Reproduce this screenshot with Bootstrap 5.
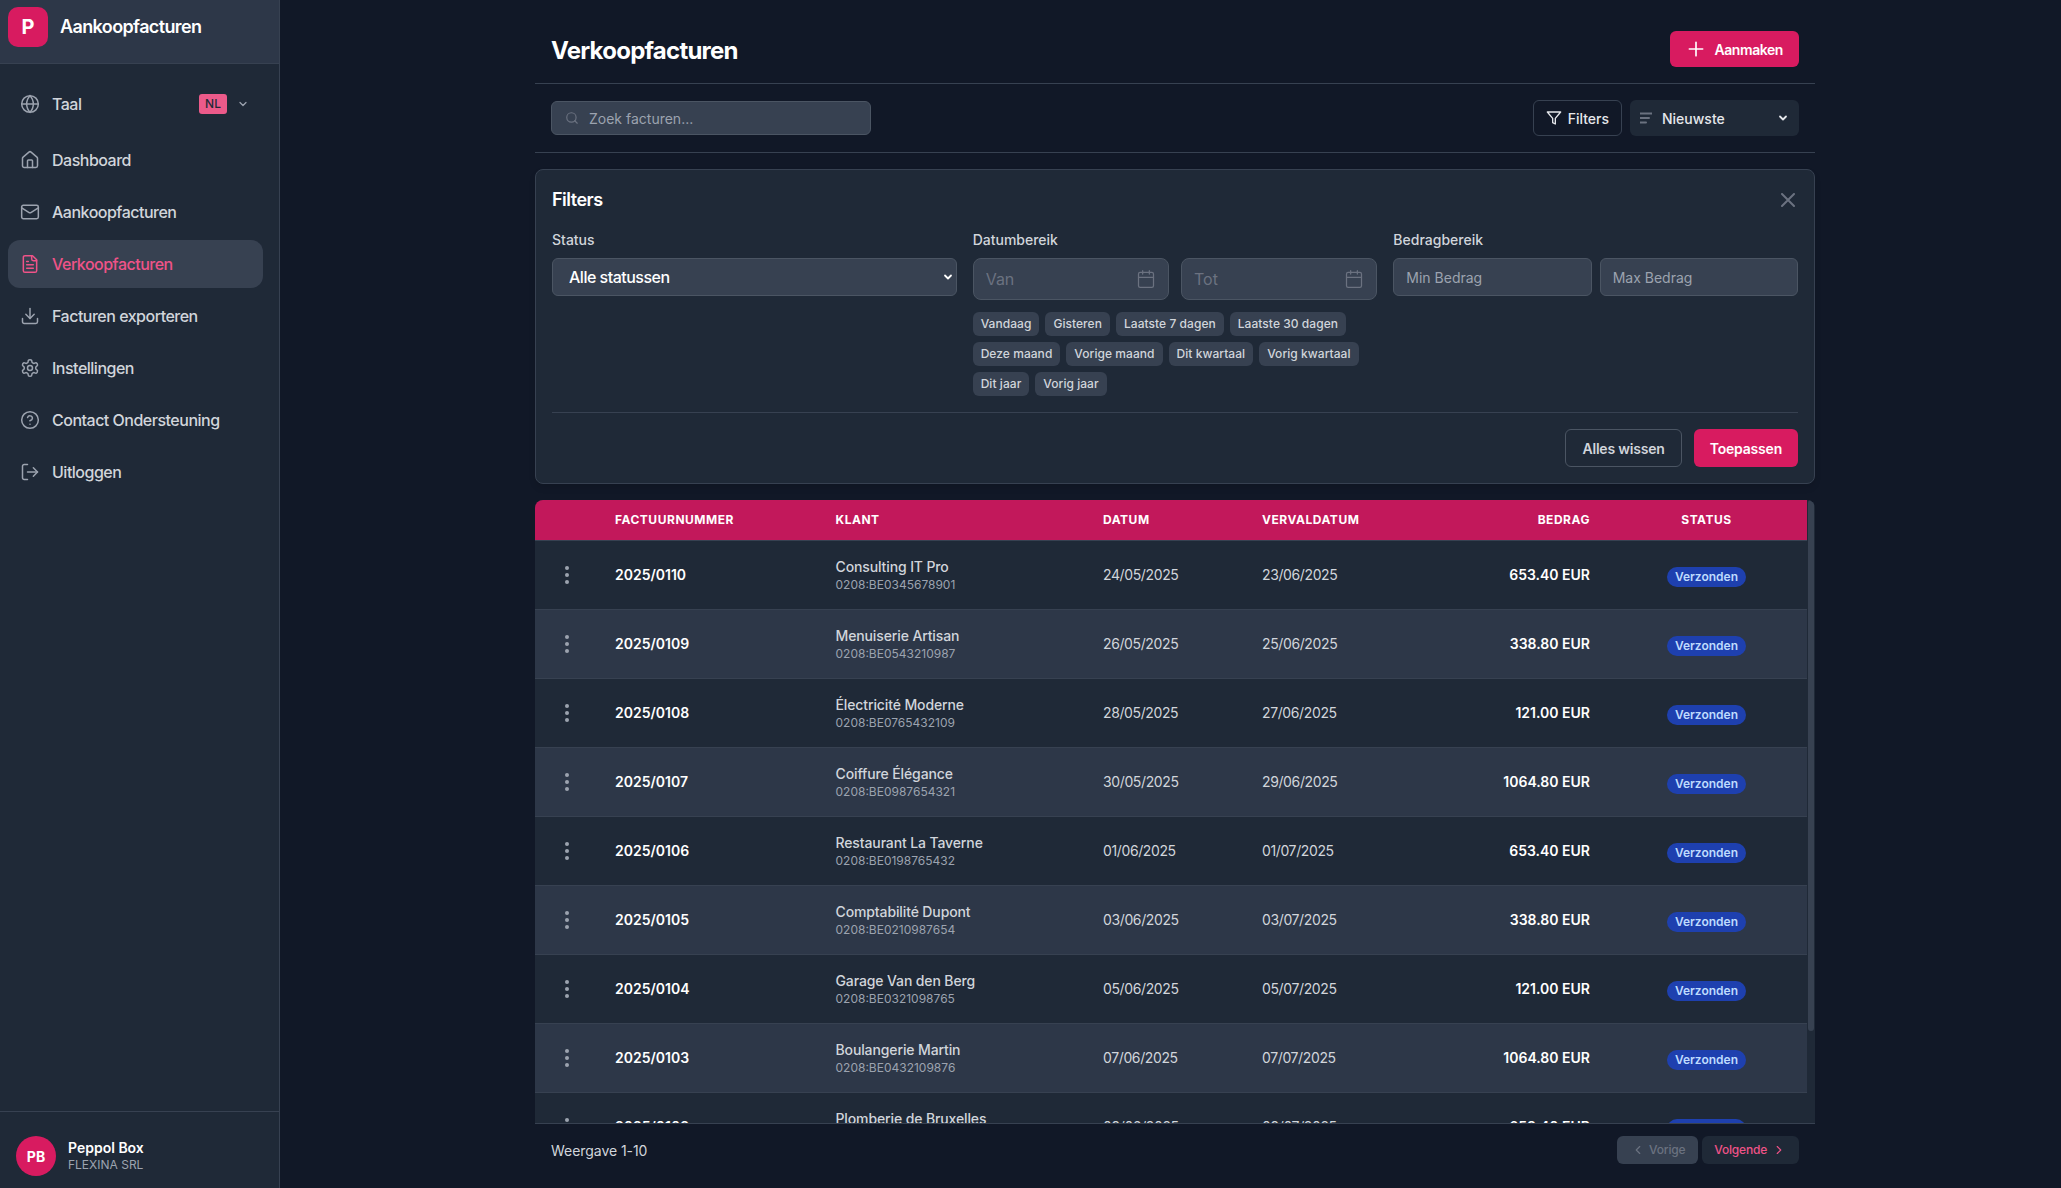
<!DOCTYPE html>
<html lang="nl">
<head>
<meta charset="utf-8">
<title>Verkoopfacturen</title>
<link rel="stylesheet" href="https://cdn.jsdelivr.net/npm/bootstrap@5.3.0/dist/css/bootstrap.min.css">
<style>
html,body{height:100%;overflow:hidden}
body{background:#111827;color:#d1d5db;font-family:Inter,"Liberation Sans",sans-serif;font-size:14px}
svg.ico{fill:none;stroke:currentColor;stroke-width:2;stroke-linecap:round;stroke-linejoin:round;flex:none}
.app-shell{height:100vh}
.side{width:280px;flex:none;background:#1f2937;border-right:1px solid #374151}
.side-head{height:64px;background:#2d3748;border-bottom:1px solid #374151;padding:7px 0 0 8px;gap:12px}
.logo-box{width:40px;height:40px;border-radius:10px;background:#d81b60;color:#fff;font-size:20px;font-weight:700}
.side-title{font-size:18px;font-weight:600;color:#fff;letter-spacing:-.62px;line-height:40px}
.side-nav{padding:16px 16px 0 8px;margin:0;list-style:none}
.nav-row{height:48px;margin-bottom:4px;padding:0 12px;gap:12px;border-radius:12px;color:#d1d5db;text-decoration:none;font-size:16px;font-weight:500;letter-spacing:-.5px}
.nav-row svg{color:#9ca3af;width:20px;height:20px;stroke-width:1.8}
.nav-row.is-active{background:#374151;color:#ef5388}
.nav-row.is-active svg{color:#ef5388}
.lang-row{margin-bottom:8px}
.lang-tag{background:#ec5a8a;color:#1f2937;font-size:12px;font-weight:500;height:20px;line-height:20px;width:28px;text-align:center;letter-spacing:0;border-radius:3px;margin-left:auto}
.nav-row svg.lang-chev{width:12px;height:12px;margin:0 2px 0 -2px;stroke-width:2.5}
.side-foot{height:77px;border-top:1px solid #374151;padding:12px 16px 0;gap:12px}
.avatar-dot{width:40px;height:40px;border-radius:50%;background:#d81b60;color:#fff;font-size:14px;font-weight:700}
.foot-name{font-size:14px;font-weight:600;color:#fff;line-height:18px}
.foot-org{font-size:12px;color:#9ca3af;line-height:16px}
.page-col{width:1280px;margin-left:255px;flex:none;height:100vh}
.page-head{height:84px;padding:16px 16px 0;border-bottom:1px solid #374151}
.page-title{font-size:24px;font-weight:700;color:#fff;margin:3px 0 0;letter-spacing:-.76px}
.btn-rose{background:#d81b60;color:#fff;border:0;border-radius:6px;font-size:14px;font-weight:600}
.btn-rose:hover{background:#c2185b;color:#fff}
.btn-add{height:36px;padding:0 16px;gap:8px;letter-spacing:-.42px;margin-bottom:1px}
.tool-bar{height:69px;padding:0 16px;border-bottom:1px solid #374151}
.search-wrap{width:320px;height:34px}
.search-wrap svg{left:14px;top:10px;width:14px;height:14px;color:#6b7280;position:absolute}
.ctl{background:#374151;border:1px solid #4b5563;color:#fff;border-radius:6px}
.ctl::placeholder{color:#9ca3af;opacity:1}
.ctl:focus{background:#374151;border-color:#4b5563;color:#fff;box-shadow:none}
.search-input{height:34px;font-size:14px;padding:0 12px 0 37px}
.btn-ghost{background:transparent;border:1px solid #374151;color:#e5e7eb;border-radius:6px;font-size:14px;font-weight:500}
.btn-filters{height:36px;padding:0 12px;gap:6px}
.sort-wrap{width:169px;height:36px;margin-left:8px}
.sort-wrap svg{position:absolute;left:10px;top:12px;width:12px;height:12px;color:#6b7280}
.sort-select{height:36px;background-color:#1f2937;border:0;color:#e5e7eb;font-size:14px;font-weight:500;padding:0 28px 0 32px;border-radius:6px;background-image:url("data:image/svg+xml,%3csvg xmlns='http://www.w3.org/2000/svg' viewBox='0 0 12 12'%3e%3cpath fill='none' stroke='%23e5e7eb' stroke-width='1.8' stroke-linecap='round' stroke-linejoin='round' d='M3 4.5 6 7.5 9 4.5'/%3e%3c/svg%3e");background-position:right 10px center;background-size:12px 12px}
.filter-panel{margin-top:16px;background:#1f2937;border:1px solid #374151;border-radius:8px;padding:16px;box-shadow:0 4px 6px rgba(0,0,0,.1);flex:none}
.panel-title{font-size:18px;font-weight:600;color:#fff;line-height:28px;margin:0;letter-spacing:-.5px}
.panel-close{width:14px;height:14px;color:#6b7280;stroke-width:1.6;margin-right:3px}
.panel-grid{display:grid;grid-template-columns:repeat(3,1fr);gap:16px;margin-top:16px}
.fld-label{font-size:14px;font-weight:500;line-height:20px;color:#d1d5db;margin-bottom:8px;display:block}
.status-select{height:38px;font-size:16px;font-weight:500;letter-spacing:-.5px;padding:0 28px 0 16px;background-image:url("data:image/svg+xml,%3csvg xmlns='http://www.w3.org/2000/svg' viewBox='0 0 12 12'%3e%3cpath fill='none' stroke='%23fff' stroke-width='1.8' stroke-linecap='round' stroke-linejoin='round' d='M3 4.5 6 7.5 9 4.5'/%3e%3c/svg%3e");background-position:right 2px center;background-size:12px 12px;background-color:#374151;color:#fff;border:1px solid #4b5563}
.status-select:focus{background-color:#374151;border-color:#4b5563;box-shadow:none;color:#fff}
.date-pair{gap:12px}
.date-input{height:42px;font-size:16px;padding:0 40px 0 12px;border-radius:8px}
.date-input::placeholder{color:#6b7280}
.date-wrap svg{position:absolute;right:13px;top:11px;width:20px;height:20px;color:#6b7280;stroke-width:1.5}
.amt-input{height:38px;font-size:14px;padding:0 12px}
.chip-list{gap:6px;margin-top:12px}
.chip-btn{height:24px;padding:0 8px;font-size:12px;font-weight:500;line-height:24px;letter-spacing:.05px;background:#374151;color:#d1d5db;border:0;border-radius:6px}
.panel-foot{margin-top:16px;padding-top:16px;border-top:1px solid #374151;gap:12px}
.panel-btn{height:38px;padding:0 16px;display:inline-flex;align-items:center;letter-spacing:-.2px}
.panel-btn.btn-ghost{border-color:#4b5563;font-weight:600;color:#d1d5db}
.table-frame{margin-top:16px;flex:1 1 0;min-height:0;overflow:hidden;border-bottom:1px solid #374151;border-top-left-radius:8px;border-top-right-radius:8px;background:#1f2937}
.table-clip{flex:1 1 0;min-width:0;overflow:hidden}
.rail{width:8px;flex:none;padding-left:1px;background:#1f2937}
.rail-thumb{height:531px;background:#374151;border-radius:3px;width:6px}
.inv-table{--bs-table-bg:#1f2937;--bs-table-color:#d1d5db;--bs-table-border-color:#374151;margin:0;table-layout:fixed;width:100%}
.inv-table thead th{background:#c2185b;color:#fff;font-size:12px;font-weight:700;line-height:16px;letter-spacing:.52px;text-transform:uppercase;padding:12px 16px;border-bottom:1px solid #374151}
.inv-table tbody td{padding:16px;vertical-align:middle;font-size:14px;line-height:20px;border-bottom:1px solid #374151}
.inv-table tbody tr:nth-child(even) td{background:#2d3748}
.c-act{width:64px}.c-num{width:220.5px}.c-cli{width:267.5px}.c-dat{width:159px}.c-due{width:190px}.c-amt{width:170px;text-align:right}.c-sta{text-align:center}
.inv-table tbody td.c-act{padding:0 0 0 20px}
.inv-table tbody td.day-cell{letter-spacing:-.38px}
.kebab-ico{width:24px;height:24px;color:#9ca3af;display:block}
.inv-num{color:#fff;font-weight:600}
.cli-name{font-weight:500;color:#d1d5db;display:block;letter-spacing:-.12px}
.cli-id{font-size:12px;line-height:16px;color:#9ca3af;display:block}
.inv-amt{color:#fff;font-weight:600}
.state-pill{display:inline-block;background:#1e40af;color:#bfdbfe;font-size:12px;font-weight:600;line-height:20px;height:20px;padding:0 8px;border-radius:10px;margin-top:4px;vertical-align:top}
.page-foot{height:64px;padding:0 16px 12px;flex:none}
.count-text{color:#d1d5db;font-size:14px;letter-spacing:-.05px}
.pager-btn{height:28px;border:0;border-radius:6px;font-size:12px;font-weight:500;letter-spacing:-.2px}
.pager-btn svg{width:14px;height:14px}
.btn.pager-prev:disabled{background:#374151;color:#6b7280;opacity:1;padding:0 13px 0 14px;gap:4px}
.pager-next{background:#1f2937;color:#ef5388;margin-left:4px;padding:0 13px 0 12px;gap:5px}
</style>
</head>
<body>
<svg width="0" height="0" class="position-absolute">
<symbol id="i-globe" viewBox="0 0 24 24"><circle cx="12" cy="12" r="10"/><path d="M12 2a14.5 14.5 0 0 0 0 20 14.5 14.5 0 0 0 0-20"/><path d="M2 12h20"/></symbol>
<symbol id="i-home" viewBox="0 0 24 24"><path d="M15 21v-8a1 1 0 0 0-1-1h-4a1 1 0 0 0-1 1v8"/><path d="M3 10a2 2 0 0 1 .709-1.528l7-5.999a2 2 0 0 1 2.582 0l7 5.999A2 2 0 0 1 21 10v9a2 2 0 0 1-2 2H5a2 2 0 0 1-2-2z"/></symbol>
<symbol id="i-mail" viewBox="0 0 24 24"><rect x="2" y="4" width="20" height="16" rx="2"/><path d="m22 7-8.97 5.7a1.94 1.94 0 0 1-2.06 0L2 7"/></symbol>
<symbol id="i-file" viewBox="0 0 24 24"><path d="M15 2H6a2 2 0 0 0-2 2v16a2 2 0 0 0 2 2h12a2 2 0 0 0 2-2V7Z"/><path d="M14 2v4a2 2 0 0 0 2 2h4"/><path d="M10 9H8"/><path d="M16 13H8"/><path d="M16 17H8"/></symbol>
<symbol id="i-down" viewBox="0 0 24 24"><path d="M21 15v4a2 2 0 0 1-2 2H5a2 2 0 0 1-2-2v-4"/><polyline points="7 10 12 15 17 10"/><line x1="12" y1="15" x2="12" y2="3"/></symbol>
<symbol id="i-gear" viewBox="0 0 24 24"><path d="M12.22 2h-.44a2 2 0 0 0-2 2v.18a2 2 0 0 1-1 1.73l-.43.25a2 2 0 0 1-2 0l-.15-.08a2 2 0 0 0-2.73.73l-.22.38a2 2 0 0 0 .73 2.73l.15.1a2 2 0 0 1 1 1.72v.51a2 2 0 0 1-1 1.74l-.15.09a2 2 0 0 0-.73 2.73l.22.38a2 2 0 0 0 2.73.73l.15-.08a2 2 0 0 1 2 0l.43.25a2 2 0 0 1 1 1.73V20a2 2 0 0 0 2 2h.44a2 2 0 0 0 2-2v-.18a2 2 0 0 1 1-1.73l.43-.25a2 2 0 0 1 2 0l.15.08a2 2 0 0 0 2.73-.73l.22-.39a2 2 0 0 0-.73-2.73l-.15-.08a2 2 0 0 1-1-1.74v-.5a2 2 0 0 1 1-1.74l.15-.09a2 2 0 0 0 .73-2.73l-.22-.38a2 2 0 0 0-2.73-.73l-.15.08a2 2 0 0 1-2 0l-.43-.25a2 2 0 0 1-1-1.73V4a2 2 0 0 0-2-2z"/><circle cx="12" cy="12" r="3"/></symbol>
<symbol id="i-help" viewBox="0 0 24 24"><circle cx="12" cy="12" r="10"/><path d="M9.09 9a3 3 0 0 1 5.83 1c0 2-3 3-3 3"/><path d="M12 17h.01"/></symbol>
<symbol id="i-out" viewBox="0 0 24 24"><path d="M9 21H5a2 2 0 0 1-2-2V5a2 2 0 0 1 2-2h4"/><polyline points="16 17 21 12 16 7"/><line x1="21" y1="12" x2="9" y2="12"/></symbol>
<symbol id="i-chev" viewBox="0 0 24 24"><path d="m6 9 6 6 6-6"/></symbol>
<symbol id="i-left" viewBox="0 0 24 24"><path d="m15 18-6-6 6-6"/></symbol>
<symbol id="i-right" viewBox="0 0 24 24"><path d="m9 18 6-6-6-6"/></symbol>
<symbol id="i-search" viewBox="0 0 24 24"><circle cx="11" cy="11" r="8"/><path d="m21 21-4.3-4.3"/></symbol>
<symbol id="i-plus" viewBox="0 0 24 24"><path d="M12 4v16M4 12h16"/></symbol>
<symbol id="i-funnel" viewBox="0 0 24 24"><polygon points="22 3 2 3 10 12.46 10 19 14 21 14 12.46 22 3"/></symbol>
<symbol id="i-sort" viewBox="0 0 12 12"><path d="M0 1.5h12M0 6h9M0 10.5h6"/></symbol>
<symbol id="i-x" viewBox="0 0 14 14"><path d="M1 1l12 12M13 1 1 13"/></symbol>
<symbol id="i-cal" viewBox="0 0 24 24"><rect x="3" y="4" width="18" height="18" rx="2"/><path d="M16 2v4M8 2v4M3 10h18"/></symbol>
<symbol id="i-dots" viewBox="0 0 24 24"><circle cx="12" cy="5" r="2" fill="currentColor" stroke="none"/><circle cx="12" cy="12" r="2" fill="currentColor" stroke="none"/><circle cx="12" cy="19" r="2" fill="currentColor" stroke="none"/></symbol>
</svg>

<div class="app-shell d-flex">
  <aside class="side d-flex flex-column">
    <div class="side-head d-flex align-items-start">
      <div class="logo-box d-flex align-items-center justify-content-center">P</div>
      <span class="side-title">Aankoopfacturen</span>
    </div>
    <nav class="side-nav flex-grow-1">
      <a href="#" class="nav-row lang-row d-flex align-items-center"><svg class="ico"><use href="#i-globe"/></svg><span>Taal</span><span class="lang-tag">NL</span><svg class="ico lang-chev"><use href="#i-chev"/></svg></a>
      <a href="#" class="nav-row d-flex align-items-center"><svg class="ico"><use href="#i-home"/></svg><span>Dashboard</span></a>
      <a href="#" class="nav-row d-flex align-items-center"><svg class="ico"><use href="#i-mail"/></svg><span>Aankoopfacturen</span></a>
      <a href="#" class="nav-row is-active d-flex align-items-center"><svg class="ico"><use href="#i-file"/></svg><span>Verkoopfacturen</span></a>
      <a href="#" class="nav-row d-flex align-items-center"><svg class="ico"><use href="#i-down"/></svg><span>Facturen exporteren</span></a>
      <a href="#" class="nav-row d-flex align-items-center"><svg class="ico"><use href="#i-gear"/></svg><span>Instellingen</span></a>
      <a href="#" class="nav-row d-flex align-items-center"><svg class="ico"><use href="#i-help"/></svg><span>Contact Ondersteuning</span></a>
      <a href="#" class="nav-row d-flex align-items-center"><svg class="ico"><use href="#i-out"/></svg><span>Uitloggen</span></a>
    </nav>
    <div class="side-foot d-flex align-items-center">
      <div class="avatar-dot d-flex align-items-center justify-content-center">PB</div>
      <div><div class="foot-name">Peppol Box</div><div class="foot-org">FLEXINA SRL</div></div>
    </div>
  </aside>

  <main class="page-col d-flex flex-column">
    <header class="page-head d-flex align-items-center justify-content-between">
      <h1 class="page-title">Verkoopfacturen</h1>
      <button class="btn btn-rose btn-add d-inline-flex align-items-center"><svg class="ico" width="20" height="20"><use href="#i-plus"/></svg>Aanmaken</button>
    </header>

    <div class="tool-bar d-flex align-items-center justify-content-between">
      <div class="search-wrap position-relative">
        <svg class="ico"><use href="#i-search"/></svg>
        <input class="form-control ctl search-input" type="text" placeholder="Zoek facturen...">
      </div>
      <div class="d-flex align-items-center">
        <button class="btn btn-ghost btn-filters d-inline-flex align-items-center"><svg class="ico" width="16" height="16"><use href="#i-funnel"/></svg>Filters</button>
        <div class="sort-wrap position-relative">
          <svg class="ico"><use href="#i-sort"/></svg>
          <select class="form-select sort-select"><option>Nieuwste</option></select>
        </div>
      </div>
    </div>

    <section class="filter-panel">
      <div class="d-flex align-items-center justify-content-between">
        <h2 class="panel-title">Filters</h2>
        <svg class="ico panel-close"><use href="#i-x"/></svg>
      </div>
      <div class="panel-grid">
        <div>
          <label class="fld-label">Status</label>
          <select class="form-select status-select"><option>Alle statussen</option></select>
        </div>
        <div>
          <label class="fld-label">Datumbereik</label>
          <div class="d-flex date-pair">
            <div class="date-wrap position-relative flex-fill"><input class="form-control ctl date-input" type="text" placeholder="Van"><svg class="ico"><use href="#i-cal"/></svg></div>
            <div class="date-wrap position-relative flex-fill"><input class="form-control ctl date-input" type="text" placeholder="Tot"><svg class="ico"><use href="#i-cal"/></svg></div>
          </div>
          <div class="chip-list d-flex flex-wrap">
            <button class="chip-btn">Vandaag</button><button class="chip-btn">Gisteren</button><button class="chip-btn">Laatste 7 dagen</button><button class="chip-btn">Laatste 30 dagen</button>
            <button class="chip-btn">Deze maand</button><button class="chip-btn">Vorige maand</button><button class="chip-btn">Dit kwartaal</button><button class="chip-btn">Vorig kwartaal</button>
            <button class="chip-btn">Dit jaar</button><button class="chip-btn">Vorig jaar</button>
          </div>
        </div>
        <div>
          <label class="fld-label">Bedragbereik</label>
          <div class="d-flex gap-2">
            <input class="form-control ctl amt-input" type="text" placeholder="Min Bedrag">
            <input class="form-control ctl amt-input" type="text" placeholder="Max Bedrag">
          </div>
        </div>
      </div>
      <div class="panel-foot d-flex justify-content-end">
        <button class="btn btn-ghost panel-btn">Alles wissen</button>
        <button class="btn btn-rose panel-btn">Toepassen</button>
      </div>
    </section>

    <div class="table-frame d-flex">
      <div class="table-clip">
      <table class="table inv-table">
        <thead><tr><th class="c-act"></th><th class="c-num">Factuurnummer</th><th class="c-cli">Klant</th><th class="c-dat">Datum</th><th class="c-due">Vervaldatum</th><th class="c-amt">Bedrag</th><th class="c-sta">Status</th></tr></thead>
        <tbody>
          <tr><td class="c-act"><svg class="ico kebab-ico"><use href="#i-dots"/></svg></td><td class="inv-num">2025/0110</td><td><span class="cli-name">Consulting IT Pro</span><span class="cli-id">0208:BE0345678901</span></td><td class="day-cell">24/05/2025</td><td class="day-cell">23/06/2025</td><td class="c-amt inv-amt">653.40 EUR</td><td class="c-sta"><span class="state-pill">Verzonden</span></td></tr>
          <tr><td class="c-act"><svg class="ico kebab-ico"><use href="#i-dots"/></svg></td><td class="inv-num">2025/0109</td><td><span class="cli-name">Menuiserie Artisan</span><span class="cli-id">0208:BE0543210987</span></td><td class="day-cell">26/05/2025</td><td class="day-cell">25/06/2025</td><td class="c-amt inv-amt">338.80 EUR</td><td class="c-sta"><span class="state-pill">Verzonden</span></td></tr>
          <tr><td class="c-act"><svg class="ico kebab-ico"><use href="#i-dots"/></svg></td><td class="inv-num">2025/0108</td><td><span class="cli-name">Électricité Moderne</span><span class="cli-id">0208:BE0765432109</span></td><td class="day-cell">28/05/2025</td><td class="day-cell">27/06/2025</td><td class="c-amt inv-amt">121.00 EUR</td><td class="c-sta"><span class="state-pill">Verzonden</span></td></tr>
          <tr><td class="c-act"><svg class="ico kebab-ico"><use href="#i-dots"/></svg></td><td class="inv-num">2025/0107</td><td><span class="cli-name">Coiffure Élégance</span><span class="cli-id">0208:BE0987654321</span></td><td class="day-cell">30/05/2025</td><td class="day-cell">29/06/2025</td><td class="c-amt inv-amt">1064.80 EUR</td><td class="c-sta"><span class="state-pill">Verzonden</span></td></tr>
          <tr><td class="c-act"><svg class="ico kebab-ico"><use href="#i-dots"/></svg></td><td class="inv-num">2025/0106</td><td><span class="cli-name">Restaurant La Taverne</span><span class="cli-id">0208:BE0198765432</span></td><td class="day-cell">01/06/2025</td><td class="day-cell">01/07/2025</td><td class="c-amt inv-amt">653.40 EUR</td><td class="c-sta"><span class="state-pill">Verzonden</span></td></tr>
          <tr><td class="c-act"><svg class="ico kebab-ico"><use href="#i-dots"/></svg></td><td class="inv-num">2025/0105</td><td><span class="cli-name">Comptabilité Dupont</span><span class="cli-id">0208:BE0210987654</span></td><td class="day-cell">03/06/2025</td><td class="day-cell">03/07/2025</td><td class="c-amt inv-amt">338.80 EUR</td><td class="c-sta"><span class="state-pill">Verzonden</span></td></tr>
          <tr><td class="c-act"><svg class="ico kebab-ico"><use href="#i-dots"/></svg></td><td class="inv-num">2025/0104</td><td><span class="cli-name">Garage Van den Berg</span><span class="cli-id">0208:BE0321098765</span></td><td class="day-cell">05/06/2025</td><td class="day-cell">05/07/2025</td><td class="c-amt inv-amt">121.00 EUR</td><td class="c-sta"><span class="state-pill">Verzonden</span></td></tr>
          <tr><td class="c-act"><svg class="ico kebab-ico"><use href="#i-dots"/></svg></td><td class="inv-num">2025/0103</td><td><span class="cli-name">Boulangerie Martin</span><span class="cli-id">0208:BE0432109876</span></td><td class="day-cell">07/06/2025</td><td class="day-cell">07/07/2025</td><td class="c-amt inv-amt">1064.80 EUR</td><td class="c-sta"><span class="state-pill">Verzonden</span></td></tr>
          <tr><td class="c-act"><svg class="ico kebab-ico"><use href="#i-dots"/></svg></td><td class="inv-num">2025/0102</td><td><span class="cli-name">Plomberie de Bruxelles</span><span class="cli-id">0208:BE0543210987</span></td><td class="day-cell">09/06/2025</td><td class="day-cell">09/07/2025</td><td class="c-amt inv-amt">653.40 EUR</td><td class="c-sta"><span class="state-pill">Verzonden</span></td></tr>
          <tr><td class="c-act"><svg class="ico kebab-ico"><use href="#i-dots"/></svg></td><td class="inv-num">2025/0101</td><td><span class="cli-name">Imprimerie Centrale</span><span class="cli-id">0208:BE0654321098</span></td><td class="day-cell">11/06/2025</td><td class="day-cell">11/07/2025</td><td class="c-amt inv-amt">338.80 EUR</td><td class="c-sta"><span class="state-pill">Verzonden</span></td></tr>
        </tbody>
      </table>
      </div>
      <div class="rail"><div class="rail-thumb"></div></div>
    </div>

    <footer class="page-foot d-flex align-items-center justify-content-between">
      <span class="count-text">Weergave 1-10</span>
      <div class="d-flex">
        <button class="btn pager-btn pager-prev d-inline-flex align-items-center" disabled><svg class="ico"><use href="#i-left"/></svg>Vorige</button>
        <button class="btn pager-btn pager-next d-inline-flex align-items-center">Volgende<svg class="ico"><use href="#i-right"/></svg></button>
      </div>
    </footer>
  </main>
</div>
<script src="https://cdn.jsdelivr.net/npm/bootstrap@5.3.0/dist/js/bootstrap.bundle.min.js"></script>
</body>
</html>
